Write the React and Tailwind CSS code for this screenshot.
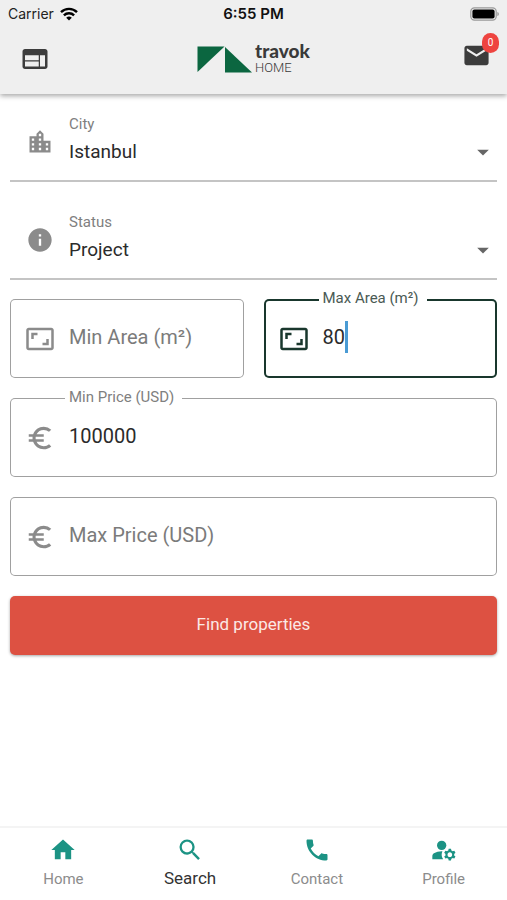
import { useState } from 'react'
import {
  MdArrowDropDown,
  MdAspectRatio,
  MdEuroSymbol,
  MdHome,
  MdInfo,
  MdLocationCity,
  MdMail,
  MdManageAccounts,
  MdPhone,
  MdSearch,
  MdWeb,
} from 'react-icons/md'

const CITIES = ['Istanbul', 'Ankara', 'Antalya', 'Bursa']
const STATUSES = ['Project', 'Ready', 'Resale']

const TABS = [
  { key: 'home',    label: 'Home',    icon: MdHome },
  { key: 'search',  label: 'Search',  icon: MdSearch },
  { key: 'contact', label: 'Contact', icon: MdPhone },
  { key: 'profile', label: 'Profile', icon: MdManageAccounts },
]

function StatusBar() {
  return (
    <div className="grid grid-cols-3 items-center h-7 px-2 font-['Inter',sans-serif] text-sm text-[#222]">
      <div className="flex items-center gap-1.5">
        <span>Carrier</span>
        <svg viewBox="0 0 18 14" className="w-[18px] h-3.5 text-black" fill="none" stroke="currentColor" strokeWidth="2.4" aria-hidden="true">
          <path d="M1 5.2a11.4 11.4 0 0 1 16 0" />
          <path d="M3.9 8.4a7.2 7.2 0 0 1 10.2 0" />
          <path d="M9 13.6 6.2 10.8a4 4 0 0 1 5.6 0z" fill="currentColor" stroke="none" />
        </svg>
      </div>
      <span className="text-center text-[15px] font-semibold text-[#111]">6:55 PM</span>
      <svg viewBox="0 0 30 14" className="justify-self-end w-[30px] h-3.5" aria-hidden="true">
        <rect x="1.8" y="0.8" width="25.4" height="12.4" rx="3.6" fill="none" stroke="#999" strokeWidth="1.2" />
        <rect x="3.4" y="2.4" width="22.2" height="9.2" rx="2" fill="#000" />
        <path d="M28.4 5v4c1-.4 1.4-1.1 1.4-2s-.4-1.6-1.4-2z" fill="#999" />
      </svg>
    </div>
  )
}

function Logo() {
  return (
    <a href="#home" className="flex items-center gap-0.5 text-[#3a3a3a]">
      <svg viewBox="0 0 56 27" className="w-14 h-[27px]" fill="#0b6640" aria-hidden="true">
        <path d="M0.5 0.5H27.5L0.5 26z" />
        <path d="M28 1v25.5h27z" />
      </svg>
      <span className="flex flex-col">
        <span className="font-['Lato',sans-serif] text-[19px] leading-[18px] font-black">travok</span>
        <span className="font-['Roboto',sans-serif] text-[13px] leading-4 font-light">HOME</span>
      </span>
    </a>
  )
}

function Header() {
  return (
    <header className="relative bg-[#efefef] shadow-[0_2px_5px_rgba(0,0,0,0.35)]">
      <StatusBar />
      <div className="grid grid-cols-[1fr_auto_1fr] items-center h-[66px] px-4 pb-1 text-[#3c3c3c]">
        <button type="button" aria-label="Menu" className="justify-self-start px-1">
          <MdWeb className="size-[30px]" />
        </button>
        <Logo />
        <button type="button" aria-label="Messages" className="relative justify-self-end pb-2">
          <MdMail className="size-[29px]" />
          <span className="absolute -top-2 -right-2 flex items-center justify-center w-[17px] h-5 rounded-full bg-[#ee4440] text-[10px] text-white">
            0
          </span>
        </button>
      </div>
    </header>
  )
}

function SelectField({ id, label, icon: Icon, options, value, onChange }) {
  return (
    <div className="flex items-center h-[78px] pl-4 border-b-2 border-[#c4c4c4]">
      <Icon className="size-7 shrink-0 text-[#8b8b8b]" />
      <div className="flex-1 flex flex-col pl-[15px]">
        <label htmlFor={id} className="text-[15px] leading-5 text-[#808080]">{label}</label>
        <div className="grid items-center">
          <select
            id={id}
            value={value}
            onChange={e => onChange(e.target.value)}
            className="col-start-1 row-start-1 appearance-none bg-transparent outline-none w-full text-[19px] leading-9 text-[#2b2b2b]"
          >
            {options.map(o => <option key={o}>{o}</option>)}
          </select>
          <MdArrowDropDown className="col-start-1 row-start-1 justify-self-end size-7 text-[#666] pointer-events-none" />
        </div>
      </div>
    </div>
  )
}

// Outlined field: the label rests inside the box while empty and sits on the border once filled
function TextField({ id, label, icon: Icon, value, onChange, active }) {
  return (
    <div
      className={`relative flex items-center h-[79px] pl-[15px] pr-3 rounded-[5px] ${
        active ? 'ring-2 ring-inset ring-[#19372d]' : 'ring-1 ring-inset ring-[#a0a0a0]'
      }`}
    >
      <Icon className={`size-[30px] shrink-0 ${active ? 'text-[#19372d]' : 'text-[#8b8b8b]'}`} />
      <label
        htmlFor={id}
        className={value
          ? `absolute left-[55px] -top-[11px] pl-1 pr-2 bg-white text-[15px] leading-5 ${active ? 'text-[#4a5a54]' : 'text-[#808080]'}`
          : 'absolute left-[59px] inset-y-0 flex items-center pb-1 text-xl text-[#7b7b7b]'}
      >
        {label}
      </label>
      <div className="flex-1 min-w-0 flex items-center pl-[14px] pb-1">
        <input
          id={id}
          inputMode="numeric"
          value={value}
          onChange={e => onChange(e.target.value)}
          className={`min-w-0 bg-transparent outline-none text-xl leading-8 text-[#2b2b2b] ${
            active ? 'field-sizing-content caret-transparent' : 'w-full'
          }`}
        />
        {active && <span className="w-[3px] h-8 bg-[#4a9bd4]" />}
      </div>
    </div>
  )
}

function TabBar({ tab, onSelect }) {
  return (
    <nav className="grid grid-cols-4 h-[74px] border-t-2 border-[#f4f4f4] bg-white">
      {TABS.map(({ key, label, icon: Icon }) => (
        <button
          key={key}
          type="button"
          onClick={() => onSelect(key)}
          className="flex flex-col items-center pt-2"
        >
          <Icon className="size-7 text-[#1c9384]" />
          <span className={tab === key ? 'text-[17px] leading-7 text-[#333]' : 'text-[15px] leading-[30px] text-[#8c8c8c]'}>
            {label}
          </span>
        </button>
      ))}
    </nav>
  )
}

export default function App() {
  const [tab, setTab] = useState('search')
  const [form, setForm] = useState({
    city: 'Istanbul',
    status: 'Project',
    minArea: '',
    maxArea: '80',
    minPrice: '100000',
    maxPrice: '',
  })

  const set = (key) => (value) => setForm(f => ({ ...f, [key]: value }))

  return (
    <div className="flex flex-col min-h-screen bg-white font-['Roboto',sans-serif]">
      <Header />

      <form className="flex-1 px-[10px] pt-[10px]" onSubmit={e => e.preventDefault()}>
        <div className="flex flex-col gap-5">
          <SelectField id="city" label="City" icon={MdLocationCity} options={CITIES} value={form.city} onChange={set('city')} />
          <SelectField id="status" label="Status" icon={MdInfo} options={STATUSES} value={form.status} onChange={set('status')} />
        </div>

        <div className="flex flex-col gap-5 pt-[19px]">
          <div className="grid grid-cols-2 gap-5">
            <TextField id="min-area" label="Min Area (m²)" icon={MdAspectRatio} value={form.minArea} onChange={set('minArea')} />
            <TextField id="max-area" label="Max Area (m²)" icon={MdAspectRatio} value={form.maxArea} onChange={set('maxArea')} active />
          </div>
          <TextField id="min-price" label="Min Price (USD)" icon={MdEuroSymbol} value={form.minPrice} onChange={set('minPrice')} />
          <TextField id="max-price" label="Max Price (USD)" icon={MdEuroSymbol} value={form.maxPrice} onChange={set('maxPrice')} />
          <button
            type="submit"
            className="h-[59px] pb-0.5 rounded-[5px] bg-[#dd5142] text-[17px] text-[#fbe9e6] shadow-[0_1px_3px_rgba(0,0,0,0.35)]"
          >
            Find properties
          </button>
        </div>
      </form>

      <TabBar tab={tab} onSelect={setTab} />
    </div>
  )
}
